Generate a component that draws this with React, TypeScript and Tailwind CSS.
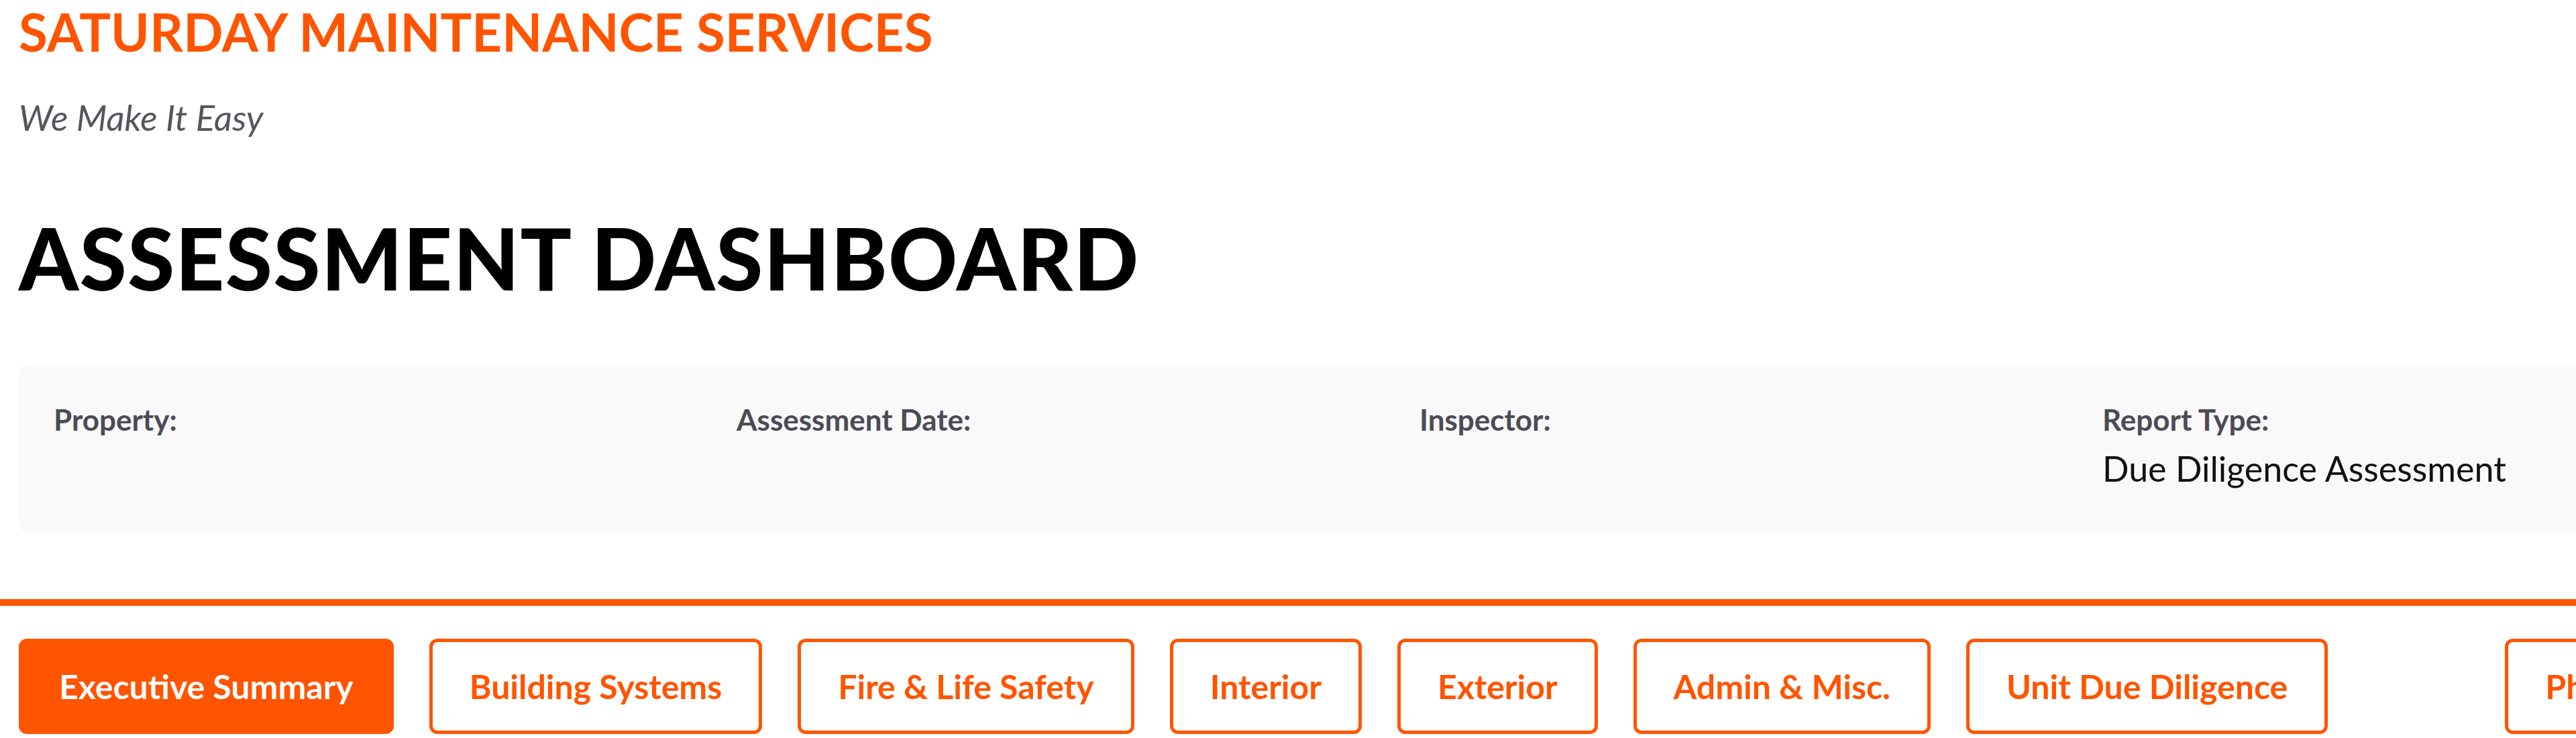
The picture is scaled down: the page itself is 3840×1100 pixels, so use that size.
const tabs = [
  "Executive Summary",
  "Building Systems",
  "Fire & Life Safety",
  "Interior",
  "Exterior",
  "Admin & Misc.",
  "Unit Due Diligence",
];

const details = [
  { label: "Property:", value: "" },
  { label: "Assessment Date:", value: "" },
  { label: "Inspector:", value: "" },
  { label: "Report Type:", value: "Due Diligence Assessment" },
];

function Tab({ name, active }: { name: string; active?: boolean }) {
  return (
    <button
      className={
        active
          ? "shrink-0 rounded-[12px] border-[5px] border-[#ff5400] bg-[#ff5400] px-[55px] py-[36px] text-[50px] font-bold leading-[1.2] text-white"
          : "shrink-0 rounded-[12px] border-[5px] border-[#ff5400] bg-white px-[55px] py-[36px] text-[50px] font-bold leading-[1.2] text-[#ff5400]"
      }
    >
      {name}
    </button>
  );
}

export default function App() {
  return (
    <div className="h-[1100px] w-[3840px] overflow-hidden bg-white font-['Lato',sans-serif]">
      <header className="w-[4200px] border-b-[10px] border-[#ff5400] px-[28px] pb-[101px] pt-px">
        <h1 className="text-[78px] font-bold leading-[1.2] text-[#ff5400]">
          SATURDAY MAINTENANCE SERVICES
        </h1>
        <p className="mt-[48px] text-[53px] italic leading-[1.2] text-[#55555d]">
          We Make It Easy
        </p>
        <h2 className="mt-[102px] text-[127px] font-black leading-[1.2] tracking-[1.5px] text-black">
          ASSESSMENT DASHBOARD
        </h2>
        <div className="mt-[83px] grid w-[4128px] grid-cols-[repeat(4,970px)] gap-x-[48px] rounded-[12px] bg-[#f9f9f9] px-[52px] pb-[57px] pt-[51px]">
          {details.map((d) => (
            <div key={d.label} className="flex flex-col">
              <span className="text-[44px] font-bold leading-[1.4] text-[#4b4b55]">{d.label}</span>
              <span className="mt-[6px] min-h-[73px] text-[52px] leading-[1.4] text-[#111111]">
                {d.value}
              </span>
            </div>
          ))}
        </div>
      </header>
      <nav className="flex w-[4200px] items-center gap-[53px] px-[28px] pt-[49px]">
        {tabs.map((t, i) => (
          <Tab key={t} name={t} active={i === 0} />
        ))}
        <div className="ml-[211px]">
          <Tab name="Photos" />
        </div>
      </nav>
    </div>
  );
}
